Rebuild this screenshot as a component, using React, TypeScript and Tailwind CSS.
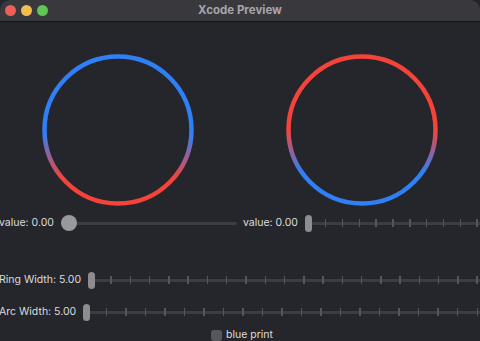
import React from "react";

function Ring({ id, top, bottom, s1, s2 }: { id: string; top: string; bottom: string; s1: string; s2: string }) {
  return (
    <svg width="152" height="152" viewBox="0 0 152 152">
      <defs>
        <linearGradient id={id} x1="0" y1="0" x2="0" y2="152" gradientUnits="userSpaceOnUse">
          <stop offset="0" stopColor={top} />
          <stop offset={s1} stopColor={top} />
          <stop offset={s2} stopColor={bottom} />
          <stop offset="1" stopColor={bottom} />
        </linearGradient>
      </defs>
      <circle cx="76" cy="76" r="73.5" fill="none" stroke={`url(#${id})`} strokeWidth="4.5" />
    </svg>
  );
}

function Ticks({ count }: { count: number }) {
  return (
    <div className="absolute inset-y-0 left-[3px] right-[3px] flex items-center justify-between">
      {Array.from({ length: count }).map((_, i) => (
        <div key={i} className="w-[1.5px] h-[8px] bg-[#55565c]" />
      ))}
    </div>
  );
}

function TickSlider({ label, count }: { label: string; count: number }) {
  return (
    <div className="flex items-center h-[20px] w-full">
      <span className="text-[10.5px] text-[#dcdcde] whitespace-nowrap mr-[7px]">{label}</span>
      <div className="relative flex-1 h-[20px] flex items-center">
        <div className="absolute left-0 right-0 h-[3px] rounded-full bg-[#3c3d43]" />
        <Ticks count={count} />
        <div className="relative w-[7px] h-[17px] rounded-full bg-[#8d8c91]" />
      </div>
    </div>
  );
}

export default function App() {
  return (
    <div
      className="w-[480px] h-[341px] overflow-hidden bg-[#25262b] flex flex-col"
      style={{ fontFamily: "Inter, 'Noto Sans', sans-serif" }}
    >
      <div className="relative h-[22px] shrink-0 bg-[#39383c] border-b border-[#121214] rounded-t-[10px] flex items-center justify-center">
        <div className="absolute left-[5px] top-[5px] flex gap-[5px]">
          <div className="w-[11px] h-[11px] rounded-full bg-[#ed5f57]" />
          <div className="w-[11px] h-[11px] rounded-full bg-[#f4bd4f]" />
          <div className="w-[11px] h-[11px] rounded-full bg-[#5fc553]" />
        </div>
        <span className="text-[11.5px] font-bold text-[#a7a6ab]">Xcode Preview</span>
      </div>

      <div className="w-[488px] -ml-[4px] flex flex-col">
        <div className="flex pt-[32px]">
          <div className="w-[244px] flex justify-center">
            <Ring id="g1" top="#2f7ff7" bottom="#f5433a" s1="0.52" s2="0.82" />
          </div>
          <div className="w-[244px] flex justify-center">
            <Ring id="g2" top="#f5433a" bottom="#2f7ff7" s1="0.5" s2="0.78" />
          </div>
        </div>

        <div className="flex mt-[7px]">
          <div className="w-[244px] px-[3px] flex items-center h-[20px]">
            <span className="text-[10.5px] text-[#dcdcde] whitespace-nowrap mr-[7px]">value: 0.00</span>
            <div className="relative flex-1 h-[20px] flex items-center">
              <div className="absolute left-0 right-0 h-[3px] rounded-full bg-[#3c3d43]" />
              <div className="relative w-[16px] h-[16px] rounded-full bg-[#99989d]" />
            </div>
          </div>
          <div className="w-[244px] px-[3px]">
            <TickSlider label="value: 0.00" count={11} />
          </div>
        </div>

        <div className="px-[3px] mt-[37px]">
          <TickSlider label="Ring Width: 5.00" count={21} />
        </div>
        <div className="px-[3px] mt-[12px]">
          <TickSlider label="Arc Width: 5.00" count={21} />
        </div>

        <div className="flex items-center justify-center mt-[6px] h-[14px] gap-[4px] ml-[4px]">
          <div className="w-[11px] h-[11px] rounded-[3px] bg-[#56575c]" />
          <span className="text-[10.5px] leading-[14px] text-[#dcdcde]">blue print</span>
        </div>
      </div>
    </div>
  );
}
